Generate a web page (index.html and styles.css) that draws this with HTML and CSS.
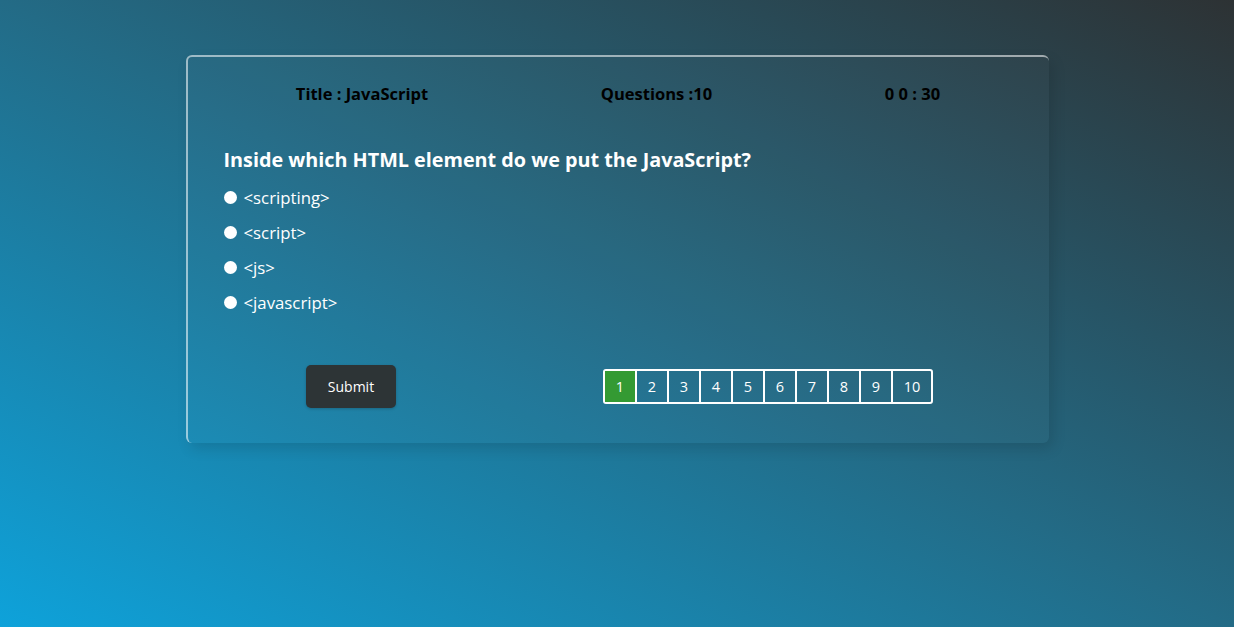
FILE: index.html
```html
<!DOCTYPE html>
<html lang="en">
<head>
<meta charset="utf-8">
<title>Quiz</title>
<link rel="stylesheet" href="styles.css">
</head>
<body>
<main class="page">
  <section class="card">
    <header class="info">
      <span class="info-item">Title : JavaScript</span>
      <span class="info-item">Questions :10</span>
      <span class="info-item">0 0 : 30</span>
    </header>
    <div class="question">
      <h2 class="question-title">Inside which HTML element do we put the JavaScript?</h2>
      <label class="option"><span class="dot"></span>&lt;scripting&gt;</label>
      <label class="option"><span class="dot"></span>&lt;script&gt;</label>
      <label class="option"><span class="dot"></span>&lt;js&gt;</label>
      <label class="option"><span class="dot"></span>&lt;javascript&gt;</label>
    </div>
    <footer class="actions">
      <button class="submit">Submit</button>
      <nav class="pager">
        <span class="page-num active">1</span>
        <span class="page-num">2</span>
        <span class="page-num">3</span>
        <span class="page-num">4</span>
        <span class="page-num">5</span>
        <span class="page-num">6</span>
        <span class="page-num">7</span>
        <span class="page-num">8</span>
        <span class="page-num">9</span>
        <span class="page-num wide">10</span>
      </nav>
    </footer>
  </section>
</main>
</body>
</html>
```
FILE: styles.css
```css
* { box-sizing: border-box; }
html, body { margin: 0; height: 100%; }
body {
  font-family: "Open Sans", "Noto Sans", sans-serif;
  background: linear-gradient(to top right, #0ea2da 0%, #236b86 50%, #2d3234 100%);
  min-height: 627px;
}
.page {
  display: flex;
  justify-content: center;
  padding-top: 55px;
}
.card {
  width: 863px;
  height: 388px;
  border-radius: 6px;
  border-top: 2px solid rgba(255, 255, 255, 0.55);
  border-left: 2px solid rgba(255, 255, 255, 0.55);
  background: rgba(255, 255, 255, 0.02);
  box-shadow: 4px 6px 14px rgba(0, 0, 0, 0.12);
  display: flex;
  flex-direction: column;
}
.info {
  display: flex;
  justify-content: space-around;
  padding: 0 22px 0 22px;
  margin-top: 24px;
  height: 24px;
  align-items: center;
}
.info-item {
  font-weight: 700;
  font-size: 16.5px;
  color: #000;
}
.question {
  padding: 0 36px;
  margin-top: 42px;
  display: flex;
  flex-direction: column;
}
.question-title {
  margin: 0 0 7px;
  font-size: 19.8px;
  font-weight: 700;
  color: #fff;
  line-height: 26px;
}
.option {
  display: flex;
  align-items: center;
  height: 35px;
  color: #fff;
  font-size: 16.8px;
}
.dot {
  width: 13px;
  height: 13px;
  border-radius: 50%;
  background: #fff;
  margin-right: 7px;
  flex: none;
}
.actions {
  display: flex;
  justify-content: space-around;
  align-items: center;
  padding: 0 12px 0 15px;
  margin-top: 45px;
}
.submit {
  width: 90px;
  height: 43px;
  border: none;
  border-radius: 5px;
  background: #2d3436;
  color: #fff;
  font-family: inherit;
  font-size: 14px;
  box-shadow: 0 1px 3px rgba(0, 0, 0, 0.2);
}
.pager {
  display: flex;
  border: 2px solid #fff;
  border-radius: 3px;
  height: 35px;
}
.page-num {
  width: 32px;
  display: flex;
  align-items: center;
  justify-content: center;
  color: #fff;
  font-size: 14.5px;
  border-left: 2px solid #fff;
}
.page-num:first-child { border-left: none; width: 30px; }
.page-num.wide { width: 40px; }
.page-num.active { background: #349a33; }
```
